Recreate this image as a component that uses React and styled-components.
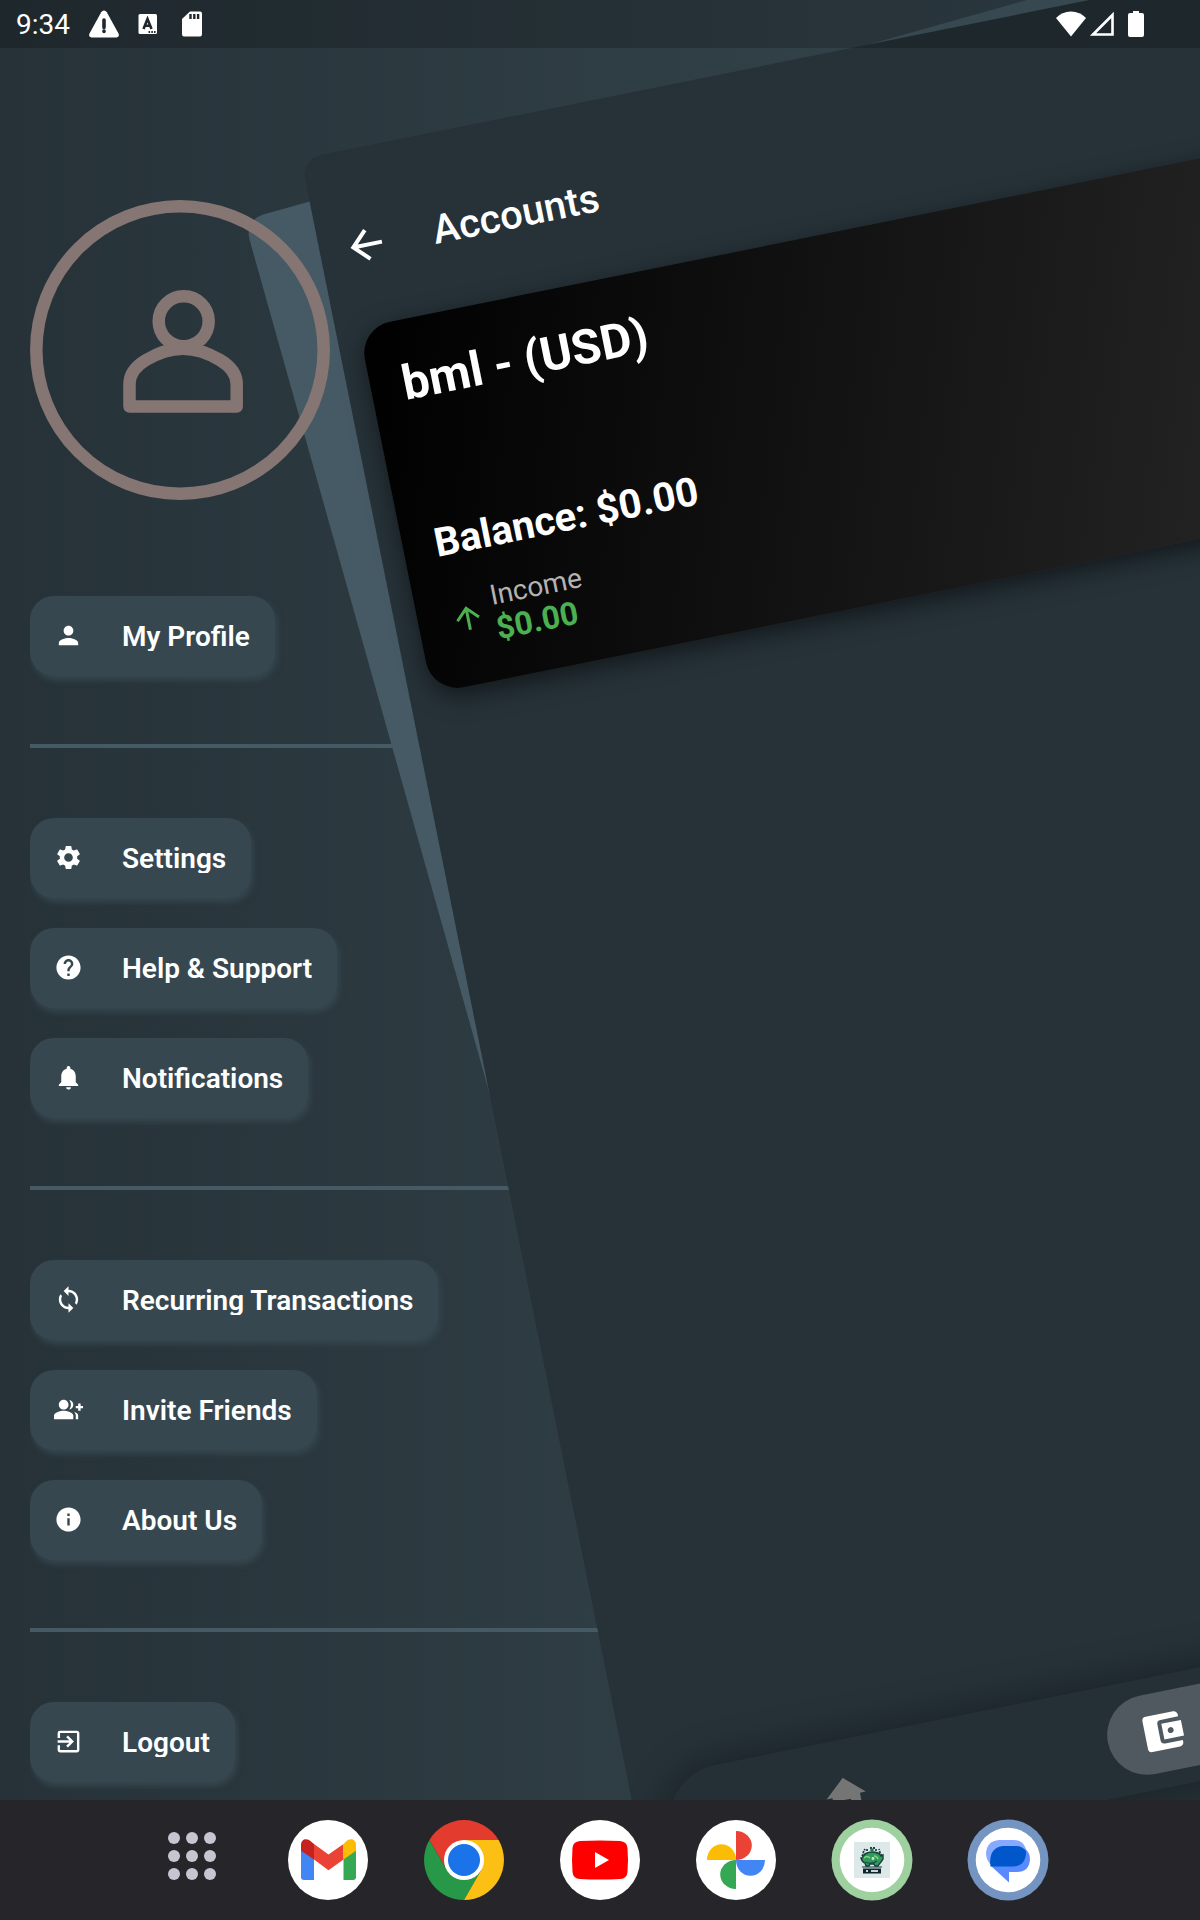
import React from "react";
import styled, { createGlobalStyle } from "styled-components";
import {
  MdAccountBalanceWallet,
  MdArrowBack,
  MdArrowUpward,
  MdExitToApp,
  MdGroupAdd,
  MdHelp,
  MdHome,
  MdInfo,
  MdNotifications,
  MdPerson,
  MdSettings,
  MdSync,
} from "react-icons/md";

const colors = {
  base: "#263238",
  raised: "#37474f",
  line: "#455a64",
  avatar: "#857573",
  dock: "#26252a",
};

const GlobalStyle = createGlobalStyle`
  *, *::before, *::after { box-sizing: border-box; }
  body {
    margin: 0;
    background: ${colors.dock};
    font-family: Roboto, "Liberation Sans", sans-serif;
    color: #fff;
  }
  button {
    margin: 0;
    padding: 0;
    border: 0;
    background: none;
    color: inherit;
    font: inherit;
    cursor: pointer;
  }
  h1, h2, p { margin: 0; }
`;

const Device = styled.div`
  display: flex;
  flex-direction: column;
  min-height: 100vh;
`;

const Stage = styled.div`
  position: relative;
  flex: 1;
  overflow: hidden;
  background: linear-gradient(90deg, ${colors.base}, ${colors.raised});
`;

/* status bar */

const StatusBar = styled.header`
  position: absolute;
  inset: 0 0 auto;
  z-index: 4;
  display: flex;
  align-items: center;
  justify-content: space-between;
  height: 48px;
  padding: 0 56px 0 16px;
  background: rgba(0, 0, 0, 0.2);
`;

const StatusGroup = styled.div`
  display: flex;
  align-items: center;
  gap: ${(p) => p.$gap}px;
`;

const StatusIcon = styled.svg`
  margin-left: ${(p) => p.$space || 0}px;
`;

const Clock = styled.time`
  padding-top: 2px;
  font-size: 28px;
  line-height: 32px;
`;

/* drawer */

const Drawer = styled.nav`
  position: relative;
  z-index: 2;
  display: flex;
  flex-direction: column;
  align-items: flex-start;
  padding: 200px 0 18px 30px;
`;

const Avatar = styled.svg`
  width: 300px;
  height: 300px;
  margin-bottom: 96px;
  fill: none;
  stroke: ${colors.avatar};
  stroke-width: 12.5;
  stroke-linejoin: round;
`;

const MenuGroup = styled.div`
  display: flex;
  flex-direction: column;
  align-items: flex-start;
  gap: 30px;
`;

const Divider = styled.hr`
  width: 100%;
  height: 4px;
  margin: 68px 0 70px;
  border: 0;
  background: ${colors.line};
`;

const MenuButton = styled.button`
  display: flex;
  align-items: center;
  gap: 39px;
  height: 80px;
  && { padding: 0 25px 0 24px; }
  border-radius: 24px;
  background: ${colors.raised};
  box-shadow: 2px 4px 6px ${colors.raised};
  clip-path: inset(-12px -12px -12px 0);
`;

const MenuIcon = styled.span`
  display: flex;
  padding-bottom: 2px;
  font-size: 29px;
`;

const MenuLabel = styled.span`
  padding-top: 2px;
  font-size: 28px;
  font-weight: 600;
  line-height: 28px;
  white-space: nowrap;
  clip-path: inset(0 -4px);
`;

/* tilted pages */

const BackPage = styled.div`
  position: absolute;
  z-index: 1;
  top: 220px;
  left: 244px;
  width: 100%;
  height: 100%;
  border-radius: 20px;
  background: ${colors.line};
  transform: rotate(-15.7deg);
  transform-origin: 0 0;
`;

const Page = styled.main`
  position: absolute;
  z-index: 3;
  top: 159px;
  left: 301px;
  display: flex;
  flex-direction: column;
  width: 100%;
  height: 100%;
  border-radius: 20px;
  background: ${colors.base};
  transform: rotate(-11.4deg);
  transform-origin: 0 0;
`;

const PageHeader = styled.div`
  display: flex;
  align-items: center;
  gap: 44px;
  height: 96px;
  margin: 49px 23px 32px;
`;

const BackButton = styled.button`
  display: flex;
  font-size: 48px;
`;

const PageTitle = styled.h1`
  font-size: 40px;
  font-weight: 500;
  line-height: 48px;
`;

const Card = styled.section`
  margin: 0 23px;
  padding: 32px 32px 34px;
  border-radius: 32px;
  background: linear-gradient(108deg, #000, #303030);
  box-shadow: 0 8px 24px rgba(0, 0, 0, 0.5);
`;

const AccountName = styled.h2`
  margin-bottom: 107px;
  font-size: 48px;
  font-weight: 700;
  line-height: 64px;
`;

const Balance = styled.p`
  font-size: 40px;
  font-weight: 700;
  line-height: 48px;
`;

const Income = styled.div`
  display: flex;
  align-items: center;
  gap: 8px;
  margin-top: 22px;
  color: #4caf50;
`;

const IncomeIcon = styled.span`
  display: flex;
  font-size: 36px;
`;

const IncomeLabel = styled.p`
  color: #b3b3b3;
  font-size: 28px;
  line-height: 32px;
`;

const IncomeValue = styled.p`
  font-size: 32px;
  font-weight: 700;
  line-height: 34px;
`;

const TabBar = styled.div`
  display: flex;
  align-items: center;
  justify-content: space-around;
  height: 112px;
  margin: auto 32px 32px;
  border-radius: 56px;
  background: #242f36;
  box-shadow: 0 0 40px rgba(0, 0, 0, 0.4);
`;

const Tab = styled.button`
  display: flex;
  align-items: center;
  justify-content: ${(p) => (p.$active ? "flex-start" : "center")};
  height: 80px;
  min-width: ${(p) => (p.$active ? 244 : 182)}px;
  && { padding: 0 32px; }
  border-radius: 40px;
  font-size: 48px;
  color: ${(p) => (p.$active ? "#fff" : "#757575")};
  background: ${(p) => (p.$active ? "#50595f" : "transparent")};
`;

/* dock */

const Dock = styled.footer`
  display: flex;
  justify-content: center;
  gap: 56px;
  padding: 20px;
  background: ${colors.dock};
`;

const DockButton = styled.button`
  display: flex;
  width: 80px;
  height: 80px;
  border-radius: 50%;
  svg { width: 80px; height: 80px; overflow: visible; }
`;

const groups = [
  [{ label: "My Profile", Icon: MdPerson }],
  [
    { label: "Settings", Icon: MdSettings },
    { label: "Help & Support", Icon: MdHelp },
    { label: "Notifications", Icon: MdNotifications },
  ],
  [
    { label: "Recurring Transactions", Icon: MdSync },
    { label: "Invite Friends", Icon: MdGroupAdd },
    { label: "About Us", Icon: MdInfo },
  ],
  [{ label: "Logout", Icon: MdExitToApp }],
];

const StatusIcons = () => (
  <>
    <StatusIcon width="30" height="28" viewBox="0 0 30 28">
      <path d="M15 0.5q1.800 0 2.800 1.800L29.500 23.500q1.200 3.500-2 4H2.500q-3.200-.5-2-4L12.200 2.300Q13.200.5 15 .5z" fill="#fff" />
      <path d="M15 10v7.500M15 21v.4" stroke="#20282e" strokeWidth="3.600" strokeLinecap="round" />
    </StatusIcon>
    <StatusIcon width="20" height="20" viewBox="0 0 20 20">
      <rect x="0.500" width="18.500" height="20" rx="1.500" fill="#fff" />
      <path d="M5.500 15L9.500 5L13.500 15M7 11.800h5" fill="none" stroke="#20282e" strokeWidth="2.600" />
      <path d="M10.500 18h1.600M13.300 18h1.600M16 18h1.600" stroke="#20282e" strokeWidth="1.800" />
    </StatusIcon>
    <StatusIcon $space={5} width="20" height="26" viewBox="0 0 20 26">
      <path d="M8 .5h10q2 0 2 2V23q0 2.500-2 2.500H2q-2 0-2-2.500V8z" fill="#fff" />
      <path d="M8.500 3v5M12.300 3v5M16.100 3v5" stroke="#20282e" strokeWidth="2.400" />
    </StatusIcon>
  </>
);

const SignalIcons = () => (
  <>
    <StatusIcon width="30" height="26" viewBox="0 0 30 26">
      <path d="M15 25.500L0 7Q6 .5 15 .5T30 7z" fill="#fff" />
    </StatusIcon>
    <StatusIcon width="26" height="26" viewBox="0 0 26 26">
      <path d="M4 23.500H23.500V4z" fill="none" stroke="#fff" strokeWidth="2.600" />
    </StatusIcon>
    <StatusIcon $space={10} width="16" height="26" viewBox="0 0 16 26">
      <path d="M5 0h6v2h3q2 0 2 2v20q0 2-2 2H2q-2 0-2-2V4q0-2 2-2h3z" fill="#fff" />
    </StatusIcon>
  </>
);

const AppsIcon = () => (
  <svg viewBox="0 0 80 80" fill="#c9c5d0">
    {[18, 36, 54].map((y) => [22, 40, 58].map((x) => <circle key={`${x}-${y}`} cx={x} cy={y} r="6" />))}
  </svg>
);

const GmailIcon = () => (
  <svg viewBox="0 0 80 80">
    <circle cx="40" cy="40" r="40" fill="#fff" />
    <path d="M13 29V57q0 3 3 3H26V38z" fill="#4285f4" />
    <path d="M68 29V57q0 3-3 3H55.500V38z" fill="#34a853" />
    <path d="M26 24L40.500 34.500L55.500 24V39.500L40.500 50.300L26 39.500z" fill="#ea4335" />
    <path d="M13 30.700V25C13 19 19 17.500 23 21.500L26 24V39.500z" fill="#c5221f" />
    <path d="M68 30.700V25C68 19 62 17.500 58 21.500L55.500 24V39.500z" fill="#fbbc04" />
  </svg>
);

const ChromeIcon = () => (
  <svg viewBox="0 0 80 80">
    <path d="M5.400 20A40 40 0 0 1 74.600 20H40L22.700 50z" fill="#e33b2e" />
    <path d="M5.400 20A40 40 0 0 0 40 80L57.300 50H22.700z" fill="#279847" />
    <path d="M74.600 20A40 40 0 0 1 40 80L57.300 50L40 20z" fill="#fcc014" />
    <circle cx="40" cy="40" r="20" fill="#fff" />
    <circle cx="40" cy="40" r="16" fill="#1a73e8" />
  </svg>
);

const YouTubeIcon = () => (
  <svg viewBox="0 0 80 80">
    <circle cx="40" cy="40" r="40" fill="#fff" />
    <path d="M20 21Q40 20 60 21Q67 21.500 67.500 28Q68.500 40 67.500 52Q67 58.500 60 59Q40 60 20 59Q13 58.500 12.500 52Q11.500 40 12.500 28Q13 21.500 20 21z" fill="#f00" />
    <path d="M35 32L49 40L35 48z" fill="#fff" />
  </svg>
);

const PhotosIcon = () => (
  <svg viewBox="0 0 80 80">
    <circle cx="40" cy="40" r="40" fill="#fff" />
    <path d="M40 11A15.800 14.500 0 0 1 40 40z" fill="#ea4335" />
    <path d="M69 40A14.500 15.800 0 0 1 40 40z" fill="#4285f4" />
    <path d="M40 69A15.800 14.500 0 0 1 40 40z" fill="#34a853" />
    <path d="M11 40A14.500 15.800 0 0 1 40 40z" fill="#fbbc04" />
  </svg>
);

const BudgetIcon = () => (
  <svg viewBox="0 0 80 80">
    <circle cx="40" cy="40" r="40.500" fill="#9fd09f" />
    <circle cx="40" cy="40" r="32.300" fill="#fff" />
    <rect x="22" y="22" width="36" height="36" fill="#dde9e9" />
    <path d="M31 33L33 29M35 31V28M38 28h5M44 31V28M48 33L47 29M30 36L32 33M50 36L48 33M34 34h3M44 33h4" stroke="#24404a" strokeWidth="1.800" strokeDasharray="2 1" />
    <path d="M30 38Q33 32 40 32T49 36L51 35V39L49 42Q47 44 46 46H43L42 44H38L37 46H34L33 43Q30 42 29 38z" fill="#2f9a59" stroke="#183f3c" strokeWidth="1.400" />
    <circle cx="40" cy="30" r="1.800" fill="#1d7a4c" />
    <path d="M32 38q3-3 6 0M42 36q3 0 4 3" stroke="#7bdc7d" strokeWidth="1.600" fill="none" />
    <path d="M34 42q5 3 11-1" stroke="#14504a" strokeWidth="1.400" fill="none" />
    <circle cx="41" cy="38.500" r="1.400" fill="#d4e4dc" />
    <rect x="30" y="46.500" width="20" height="1" fill="#183038" />
    <rect x="31" y="48.500" width="18" height="5" fill="#10262e" />
    <path d="M34 51h2M39 51h7" stroke="#c7d8da" strokeWidth="1.800" />
  </svg>
);

const MessagesIcon = () => (
  <svg viewBox="0 0 80 80">
    <circle cx="40" cy="40" r="40.500" fill="#7494c1" />
    <circle cx="40" cy="40" r="32.300" fill="#fff" />
    <path d="M31 20H46Q55 20 58 29V40L22 44Q18 39 18 33Q19 21 31 20z" fill="#87a9ff" />
    <path d="M57.500 29Q62 33 62 39.500Q61 52 49 52H41V62.500L23 46V40z" fill="#598bff" />
    <path d="M35 26H48Q55 26 58 31.500Q58 46 45 46.500H22.500Q20 28 35 26z" fill="#0057cc" />
  </svg>
);

const apps = [
  { name: "All apps", Icon: AppsIcon },
  { name: "Gmail", Icon: GmailIcon },
  { name: "Chrome", Icon: ChromeIcon },
  { name: "YouTube", Icon: YouTubeIcon },
  { name: "Photos", Icon: PhotosIcon },
  { name: "Budget", Icon: BudgetIcon },
  { name: "Messages", Icon: MessagesIcon },
];

export default function App() {
  return (
    <Device>
      <GlobalStyle />
      <Stage>
        <StatusBar>
          <StatusGroup $gap={19}>
            <Clock>9:34</Clock>
            <StatusIcons />
          </StatusGroup>
          <StatusGroup $gap={3}>
            <SignalIcons />
          </StatusGroup>
        </StatusBar>

        <BackPage />

        <Drawer>
          <Avatar viewBox="0 0 300 300">
            <circle cx="150" cy="150" r="143.700" />
            <circle cx="153.700" cy="121.300" r="25" />
            <path d="M99.500 206.500V184C99.500 173 106 166 116 160C128 153 139 148.750 153 148.750C167 148.750 178 153 190 160C200 166 206.700 173 206.700 184V206.500Z" />
          </Avatar>
          {groups.map((items, i) => (
            <React.Fragment key={items[0].label}>
              {i > 0 && <Divider />}
              <MenuGroup>
                {items.map(({ label, Icon }) => (
                  <MenuButton key={label} type="button">
                    <MenuIcon><Icon /></MenuIcon>
                    <MenuLabel>{label}</MenuLabel>
                  </MenuButton>
                ))}
              </MenuGroup>
            </React.Fragment>
          ))}
        </Drawer>

        <Page>
          <PageHeader>
            <BackButton type="button" aria-label="Back"><MdArrowBack /></BackButton>
            <PageTitle>Accounts</PageTitle>
          </PageHeader>
          <Card>
            <AccountName>bml - (USD)</AccountName>
            <Balance>Balance: $0.00</Balance>
            <Income>
              <IncomeIcon><MdArrowUpward /></IncomeIcon>
              <div>
                <IncomeLabel>Income</IncomeLabel>
                <IncomeValue>$0.00</IncomeValue>
              </div>
            </Income>
          </Card>
          <TabBar>
            <Tab type="button" aria-label="Home"><MdHome /></Tab>
            <Tab type="button" aria-label="Wallet" $active><MdAccountBalanceWallet /></Tab>
            <Tab type="button" aria-label="More" />
          </TabBar>
        </Page>
      </Stage>

      <Dock>
        {apps.map(({ name, Icon }) => (
          <DockButton key={name} type="button" aria-label={name}><Icon /></DockButton>
        ))}
      </Dock>
    </Device>
  );
}
